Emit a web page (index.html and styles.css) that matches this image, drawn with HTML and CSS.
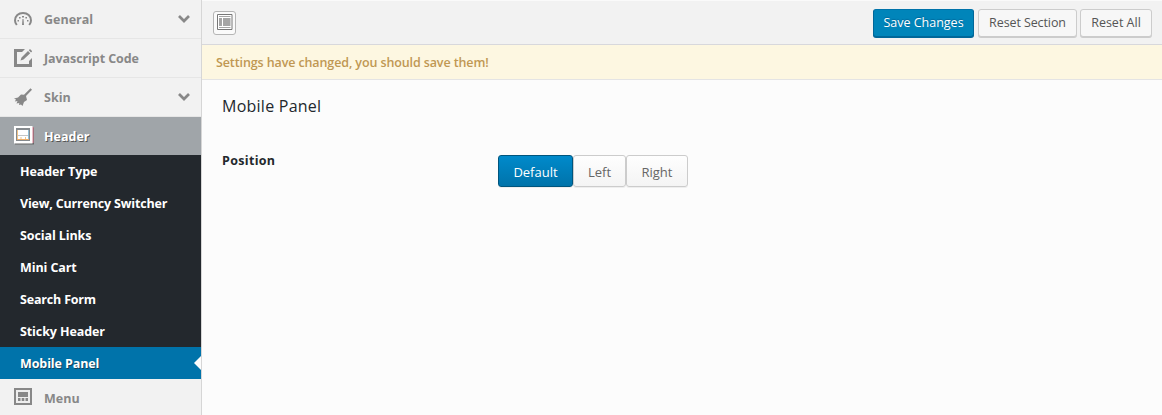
FILE: index.html
```html
<!DOCTYPE html>
<html lang="en">
<head>
<meta charset="utf-8">
<title>Theme Options</title>
<link rel="stylesheet" href="styles.css">
</head>
<body>
<div class="panel">
  <nav class="sidebar">
    <a class="item"><svg class="icon" viewBox="0 0 18 18"><path d="M2.800 15C1.600 13.500 1 12 1 10.500 1 6 4.500 3 9 3s8 3 8 7.500c0 1.500-.6 3-1.800 4.500" fill="none" stroke="#888" stroke-width="2"/><path d="M8.500 9h1l.5 6H8zM8 6h2v1.500H8zM5 7h1.600v1.600H5zM11.400 7H13v1.600h-1.600zM3.500 10H5v1.500H3.500zM13 10h1.500v1.500H13z" fill="#888"/></svg><span>General</span><svg class="chevron" viewBox="0 0 12 8"><path d="M1 1l5 5 5-5" fill="none" stroke="#888" stroke-width="2.700"/></svg></a>
    <a class="item"><svg class="icon" viewBox="0 0 18 18"><path d="M11 0H0v18h18V9l-3 3v3H3V3h5z" fill="#888"/><path d="M6.500 11.500l1-3L14 2l2.200 2.200-6.700 6.300zM14.800 1.200L16 0l2.200 2.200L17 3.400z" fill="#888"/></svg><span class="w-js">Javascript Code</span></a>
    <a class="item"><svg class="icon" viewBox="0 0 18 18"><path d="M16.500.3L18 1.700l-6 6.300 1 4-3 2-1.500 4-1.500-1.500-2 .5.3-2-2.800.5 1-2.500L.8 13.500 2 11.500 0 10.500 4 9.500l3-3 3 .3z" fill="#888"/></svg><span>Skin</span><svg class="chevron" viewBox="0 0 12 8"><path d="M1 1l5 5 5-5" fill="none" stroke="#888" stroke-width="2.700"/></svg></a>
    <a class="item item-open"><svg class="icon" viewBox="0 0 20 20"><path d="M1 1.500h19v17H1z" fill="#666"/><path d="M18 1h1.500v16H18z" fill="#d77d91"/><path d="M0 0h18.500v17.500H0z" fill="#fff"/><path d="M2 2h14v13H2z" fill="#858a8e"/><path d="M3 4h1v9H3z" fill="#efc38a"/><path d="M4 4h10v5.500H4zM4 10h10v3.500H4z" fill="#fff"/><path d="M6.500 11h1v3h-1zM11 11h1v3h-1z" fill="#e8c690"/><path d="M14 4h1v9h-1z" fill="#91bfd6"/><path d="M3 13h12v1H3z" fill="#efad67"/></svg><span>Header</span></a>
    <div class="submenu">
      <a class="sub s1"><span>Header Type</span></a>
      <a class="sub s2"><span>View, Currency Switcher</span></a>
      <a class="sub s3"><span>Social Links</span></a>
      <a class="sub s4"><span>Mini Cart</span></a>
      <a class="sub s5"><span>Search Form</span></a>
      <a class="sub s6"><span>Sticky Header</span></a>
      <a class="sub s7 sub-active"><span>Mobile Panel</span></a>
    </div>
    <a class="item item-last"><svg class="icon" viewBox="0 0 18 18"><path d="M0 0h18v17H0z" fill="#888"/><path d="M2 2h14v13H2z" fill="#eee"/><path d="M4 4h10v5H4zM4 10h2.500v3H4zM7.700 10h2.600v3H7.700zM11.500 10H14v3h-2.500z" fill="#888"/></svg><span>Menu</span></a>
  </nav>
  <main class="main">
    <header class="toolbar">
      <button class="expand"><svg viewBox="0 0 16 17"><path d="M.5.500h14.500v15H.5z" fill="#fff" stroke="#777"/><path d="M2 2h11.500v1H2zM2 4h3v8H2zM6 4h7.500v8H6zM2 13h11.500v1H2z" fill="#a5a5a5"/></svg></button>
      <div class="actions">
        <button class="btn btn-save"><span>Save Changes</span></button>
        <button class="btn btn-section"><span>Reset Section</span></button>
        <button class="btn btn-all"><span>Reset All</span></button>
      </div>
    </header>
    <div class="notice"><span>Settings have changed, you should save them!</span></div>
    <section class="content">
      <h2 class="title"><span>Mobile Panel</span></h2>
      <div class="field">
        <div class="label"><span>Position</span></div>
        <div class="choices">
          <button class="choice choice-on"><span>Default</span></button>
          <button class="choice choice-left"><span>Left</span></button>
          <button class="choice choice-right"><span>Right</span></button>
        </div>
      </div>
    </section>
  </main>
</div>
</body>
</html>
```
FILE: styles.css
```css
* { box-sizing: border-box; }
body { margin: 0; overflow: hidden; font: 13px/18px "Open Sans", "Noto Sans", sans-serif; }
button { margin: 0; padding: 0; font: inherit; }
span { white-space: nowrap; }
.panel { display: flex; width: 1162px; height: 415px; background: #fcfcfc; }
.sidebar { width: 202px; flex: none; border-right: 1px solid #d6d6d6; background: #f2f2f2; font-weight: 700; font-size: 12.5px; overflow: hidden; }
.item { display: flex; align-items: center; height: 39px; padding: 0 11px 0 14px; border-bottom: 1px solid #e6e6e6; color: #888; }
.item span, .sub span { padding-top: 2px; }
.item .icon { width: 18px; height: 18px; margin-right: 12px; flex: none; }
.w-js { letter-spacing: -0.08px; }
.item-open .icon { width: 20px; height: 20px; margin-right: 10px; }
.chevron { width: 12px; height: 8px; margin-left: auto; }
.item-open { height: 38px; border: 0; background: #a0a5a9; color: #fff; text-shadow: 1px 1px 0 #555; }
.submenu { background: #23282d; color: #fff; }
.sub { position: relative; display: flex; align-items: center; height: 32px; padding-left: 20px; letter-spacing: -0.1px; }
.s2 { letter-spacing: -0.18px; }
.s5 { letter-spacing: -0.18px; }
.sub-active { background: #0073aa; text-shadow: 1px 1px 0 #14425b; }
.sub-active::after { content: ""; position: absolute; right: 0; top: 9px; border: 7px solid transparent; border-left: 0; border-right-color: #fcfcfc; }
.item-last { height: 36px; border: 0; }
.item-last span { padding-top: 3px; }
.main { flex: 1; min-width: 0; }
.toolbar { display: flex; align-items: center; justify-content: space-between; height: 45px; padding: 0 10px 0 11px; border-top: 1px solid #fafafa; border-bottom: 1px solid #d8d8dc; background: #f2f2f2; }
.expand { display: flex; align-items: center; justify-content: center; width: 23px; height: 24px; border: 1px solid #b5b5b5; border-radius: 3px; background: #fafafa; }
.expand svg { width: 16px; height: 17px; }
.actions { display: flex; gap: 4px; font-size: 12.5px; }
.btn { height: 28px; border: 1px solid #ccc; border-radius: 3px; background: #f7f7f7; color: #555; box-shadow: 0 1px 0 #ccc; }
.btn-save { width: 101px; border-color: #0073aa #006799 #006799; background: #0085ba; color: #fff; box-shadow: 0 1px 0 #006799; text-shadow: 0 -1px 1px #006799; }
.btn-section { width: 99px; letter-spacing: -0.1px; }
.btn-all { width: 72px; margin-left: -1px; }
.notice { display: flex; align-items: center; height: 35px; padding: 2px 0 0 14px; border-bottom: 1px solid #e4e4e4; background: #fdf7e1; color: #c09853; font-weight: 600; font-size: 12.5px; letter-spacing: -0.11px; }
.content { padding: 14px 20px; }
.title { margin: 0; font-size: 16px; line-height: 24px; font-weight: 500; letter-spacing: 0.25px; color: #23282d; }
.field { display: flex; margin-top: 37px; }
.label { width: 276px; line-height: 11px; font-weight: 700; font-size: 12.5px; letter-spacing: 0.32px; color: #23282d; }
.choices { display: flex; font-size: 13px; }
.choice { height: 32px; padding-top: 2px; border: 1px solid #ccc; border-radius: 3px; background: linear-gradient(#fefefe, #f4f4f4); color: #666; box-shadow: 0 1px 0 #eee; }
.choice-on { width: 75px; border-color: #00557d; background: linear-gradient(#008acb, #0073aa); color: #fff; }
.choice-left { width: 53px; }
.choice-right { width: 62px; }
```
